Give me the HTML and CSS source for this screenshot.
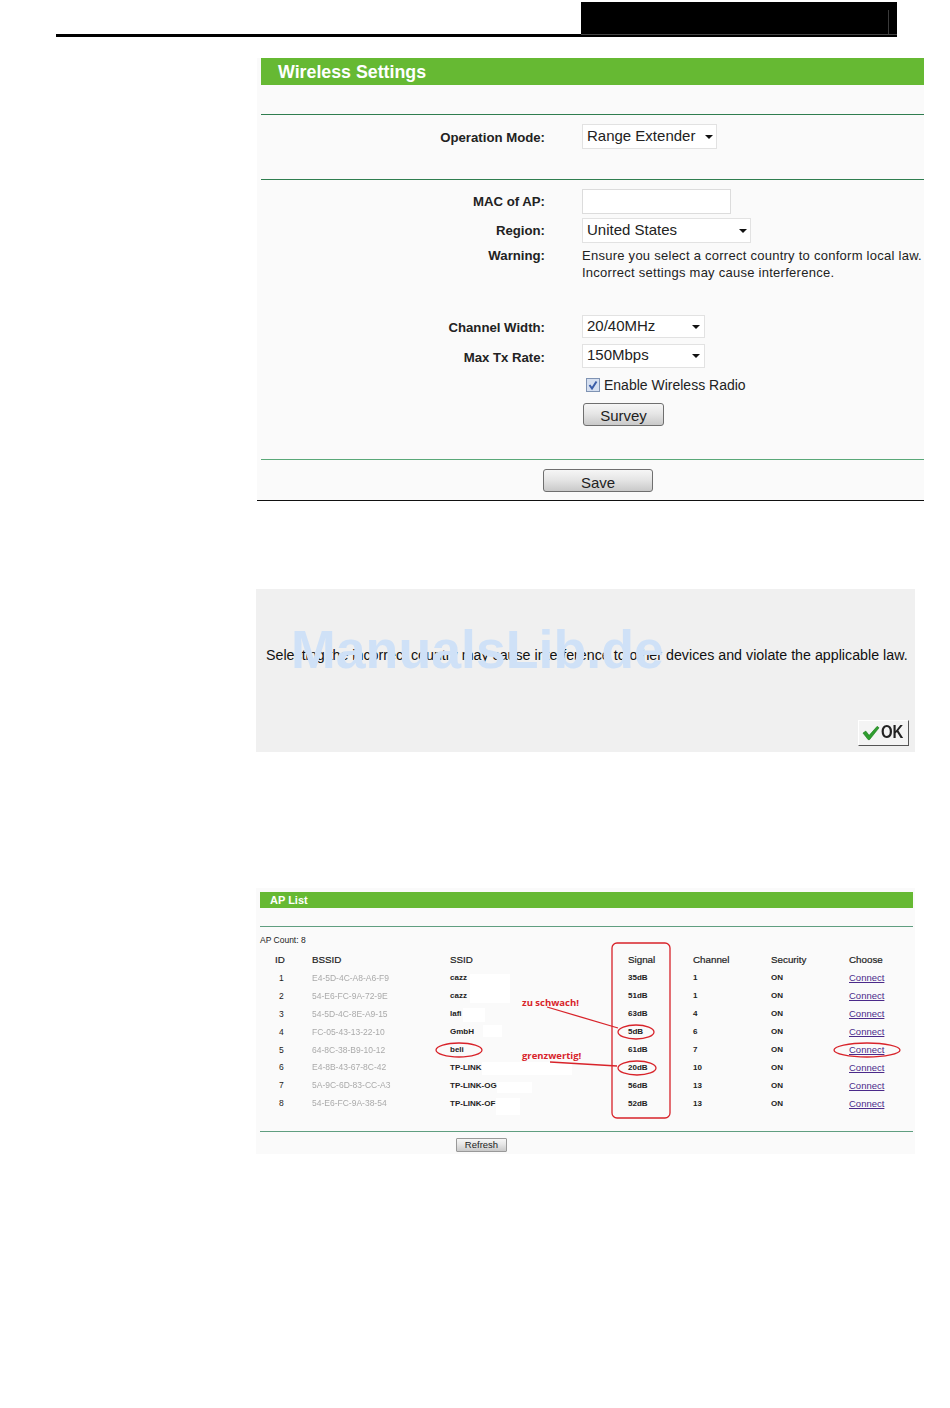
FILE: index.html
```html
<!DOCTYPE html>
<html lang="en">
<head>
<meta charset="utf-8">
<title>Wireless Settings</title>
<link rel="stylesheet" href="styles.css">
</head>
<body>
<header class="page-head"><div class="head-block"><div class="head-rule"></div></div></header>

<section class="settings">
  <h1 class="bar">Wireless Settings</h1>
  <div class="rule rule-first"></div>
  <div class="row row-mode"><div class="label">Operation Mode:</div><div class="select w135"><span>Range Extender</span><i class="caret"></i></div></div>
  <div class="rule rule-second"></div>
  <div class="row row-mac"><div class="label">MAC of AP:</div><div class="input"></div></div>
  <div class="row row-region"><div class="label">Region:</div><div class="select w169"><span>United States</span><i class="caret"></i></div></div>
  <div class="row row-warning"><div class="label">Warning:</div><div class="warning">Ensure you select a correct country to conform local law.<br>Incorrect settings may cause interference.</div></div>
  <div class="row row-channel"><div class="label">Channel Width:</div><div class="select w123"><span>20/40MHz</span><i class="caret"></i></div></div>
  <div class="row row-rate"><div class="label">Max Tx Rate:</div><div class="select w123"><span>150Mbps</span><i class="caret"></i></div></div>
  <div class="row row-check"><div class="label"></div><div class="check-wrap">
    <svg class="check" width="14" height="14" viewBox="0 0 14 14"><rect x="0.5" y="0.5" width="13" height="13" fill="#d5dff0" stroke="#7f93b3"/><path d="M3.5 7 L6 10.5 L10.5 3.5" fill="none" stroke="#3a5da8" stroke-width="2"/></svg>
    <span>Enable Wireless Radio</span></div></div>
  <div class="row row-survey"><div class="label"></div><button class="btn btn-survey">Survey</button></div>
  <div class="rule rule-third"></div>
  <div class="save-row"><button class="btn btn-save">Save</button></div>
</section>

<section class="dialog">
  <p class="dialog-text">Selecting the incorrect country may cause interference to other devices and violate the applicable law.</p>
  <div class="dialog-foot"><button class="ok">
    <svg width="19" height="16" viewBox="0 0 19 16"><path d="M1 8 L4 6 L7.5 10.5 L16 1 L18 2.5 L8 15 L6.5 15 Z" fill="#2f9e2f" stroke="#1c7a1c" stroke-width="0.6"/></svg>
    <span class="ok-text">OK</span></button></div>
  <div class="watermark">ManualsLib.de</div>
</section>

<section class="aplist">
  <h2 class="bar-small">AP List</h2>
  <div class="rule-small rule-top"></div>
  <div class="ap-count">AP Count: 8</div>
  <table class="ap-table">
    <thead><tr><th class="c-id">ID</th><th class="c-bssid">BSSID</th><th class="c-ssid">SSID</th><th class="c-signal">Signal</th><th class="c-channel">Channel</th><th class="c-sec">Security</th><th class="c-choose">Choose</th></tr></thead>
    <tbody>
      <tr><td class="n">1</td><td class="mac">E4-5D-4C-A8-A6-F9</td><td>cazz</td><td>35dB</td><td>1</td><td>ON</td><td><a href="#">Connect</a></td></tr>
      <tr><td class="n">2</td><td class="mac">54-E6-FC-9A-72-9E</td><td>cazz</td><td>51dB</td><td>1</td><td>ON</td><td><a href="#">Connect</a></td></tr>
      <tr><td class="n">3</td><td class="mac">54-5D-4C-8E-A9-15</td><td>lafi</td><td>63dB</td><td>4</td><td>ON</td><td><a href="#">Connect</a></td></tr>
      <tr><td class="n">4</td><td class="mac">FC-05-43-13-22-10</td><td>GmbH</td><td>5dB</td><td>6</td><td>ON</td><td><a href="#">Connect</a></td></tr>
      <tr><td class="n">5</td><td class="mac">64-8C-38-B9-10-12</td><td>beli</td><td>61dB</td><td>7</td><td>ON</td><td><a href="#">Connect</a></td></tr>
      <tr><td class="n">6</td><td class="mac">E4-8B-43-67-8C-42</td><td>TP-LINK</td><td>20dB</td><td>10</td><td>ON</td><td><a href="#">Connect</a></td></tr>
      <tr><td class="n">7</td><td class="mac">5A-9C-6D-83-CC-A3</td><td>TP-LINK-OG</td><td>56dB</td><td>13</td><td>ON</td><td><a href="#">Connect</a></td></tr>
      <tr><td class="n">8</td><td class="mac">54-E6-FC-9A-38-54</td><td>TP-LINK-OF</td><td>52dB</td><td>13</td><td>ON</td><td><a href="#">Connect</a></td></tr>
    </tbody>
  </table>
  <div class="rule-small rule-bottom"></div>
  <div class="refresh-row"><button class="btn btn-refresh">Refresh</button></div>
  <svg class="marks" viewBox="256 888 659 266" width="659" height="266">
    <g fill="#fff">
      <rect x="470" y="974" width="40" height="29"/>
      <rect x="463" y="1008" width="22" height="14"/>
      <rect x="483" y="1025" width="19" height="12"/>
      <rect x="482" y="1062" width="90" height="13"/>
      <rect x="497" y="1082" width="35" height="11"/>
      <rect x="496" y="1098" width="24" height="17"/>
    </g>
    <g fill="none" stroke="#d8232a" stroke-width="1.3">
      <rect x="612" y="943" width="58" height="175" rx="5"/>
      <ellipse cx="636" cy="1032" rx="18" ry="7"/>
      <ellipse cx="637" cy="1068" rx="19" ry="7"/>
      <ellipse cx="867" cy="1050" rx="33" ry="7"/>
      <ellipse cx="459" cy="1050" rx="23" ry="7"/>
      <path d="M547 1007 L618 1028"/>
      <path d="M550 1062 L617 1066"/>
    </g>
    <text class="note" x="522" y="1006">zu schwach!</text>
    <text class="note" x="522" y="1059">grenzwertig!</text>
  </svg>
</section>
</body>
</html>
```
FILE: styles.css
```css
* { box-sizing: border-box; }
html, body { margin: 0; padding: 0; background: #fff; }
body { width: 950px; height: 1408px; overflow: hidden; font-family: "Liberation Sans", Arial, sans-serif; color: #222; }

.page-head { margin: 0 0 0 56px; width: 841px; height: 37px; border-bottom: 3px solid #000; padding-top: 2px; display: flex; justify-content: flex-end; }
.head-block { width: 316px; height: 33px; background: #000; border-bottom: 1px solid #444; position: relative; }
.head-rule { position: absolute; right: 8px; top: 8px; bottom: 0; width: 1px; background: #3a3a3a; }

.settings { margin: 21px 0 0 257px; width: 667px; height: 443px; background: #fafafa; border-bottom: 1px solid #111; padding-left: 4px; }
.bar { margin: 0; height: 27px; background: #66b933; color: #fff; font-size: 17.8px; line-height: 28px; font-weight: bold; padding-left: 17px; }
.rule { height: 1px; background: #2f7d4f; }
.rule-first { margin-top: 29px; }
.rule-second { margin-top: 30px; }
.rule-third { margin-top: 33px; background: #5aa878; }

.row { display: flex; align-items: center; }
.label { width: 284px; text-align: right; font-size: 13.2px; font-weight: bold; color: #222; margin-right: 37px; flex: none; }
.row-mode { margin-top: 9px; height: 25px; margin-bottom: 30px; }
.row-mode .label { padding-top: 1px; }
.row-mac { margin-top: 9px; height: 25px; }
.row-region { margin-top: 4px; height: 25px; }
.row-warning { margin-top: 4px; align-items: flex-start; height: 35px; }
.row-warning .label { padding-top: 1px; }
.row-channel { margin-top: 33px; height: 23px; }
.row-rate { margin-top: 6px; height: 24px; }
.row-channel .label, .row-rate .label { padding-top: 2px; }
.row-check { margin-top: 8px; height: 18px; }
.row-survey { margin-top: 9px; height: 23px; }

.select { height: 100%; background: #fff; border: 1px solid #e2e2e2; padding: 0 3px 3px 4px; font-size: 15px; color: #222; display: flex; align-items: center; justify-content: space-between; }
.w135 { width: 135px; }
.w169 { width: 169px; }
.w123 { width: 123px; }
.w123 .caret { margin-right: 1px; }
.caret { width: 0; height: 0; border-left: 4px solid transparent; border-right: 4px solid transparent; border-top: 4px solid #111; margin-top: 3px; flex: none; }
.input { width: 149px; height: 25px; background: #fff; border: 1px solid #dcdcdc; }
.warning { font-size: 13px; line-height: 17px; letter-spacing: 0.26px; color: #222; white-space: nowrap; }
.check-wrap { display: flex; align-items: center; gap: 4px; margin-left: 4px; font-size: 14px; color: #222; }
.check { flex: none; }

.btn { border: 1px solid #6f6f6f; border-radius: 3px; background: linear-gradient(#f6f6f6, #e6e6e6 45%, #c9c9c9); font-family: "Liberation Sans", Arial, sans-serif; color: #222; padding: 0; }
.btn-survey { width: 81px; height: 23px; margin-left: 1px; font-size: 15px; padding-top: 1px; }
.save-row { padding: 9px 0 0 282px; }
.btn-save { display: block; width: 110px; height: 23px; font-size: 15px; padding-top: 3px; }

.dialog { position: relative; margin: 88px 0 0 256px; width: 659px; height: 163px; background: #f0f0f0; overflow: hidden; }
.dialog-text { margin: 0; padding-top: 58px; padding-left: 10px; height: 131px; font-size: 14.25px; color: #111; white-space: nowrap; }
.dialog-foot { display: flex; justify-content: flex-end; padding-right: 6px; }
.ok { width: 51px; height: 26px; padding: 0 0 0 3px; background: #f4f4f4; border: 1px solid; border-color: #fff #555 #555 #fff; display: flex; align-items: center; gap: 1px; font-family: "Liberation Sans", Arial, sans-serif; font-weight: bold; font-size: 18px; color: #222; }
.ok-text { display: block; transform: scaleX(0.83); transform-origin: left center; margin-top: -2px; }
.watermark { position: absolute; left: 35px; top: 30px; font-size: 53.7px; font-weight: bold; line-height: 60px; color: #cfe1f7; white-space: nowrap; }

.aplist { position: relative; margin: 136px 0 0 256px; width: 659px; height: 266px; background: #fafafa; padding-left: 4px; padding-top: 4px; overflow: hidden; }
.bar-small { margin: 0; width: 653px; height: 16px; background: #66b933; color: #fff; font-size: 11px; line-height: 16px; font-weight: bold; padding-left: 10px; }
.rule-small { width: 653px; height: 1px; background: #5f9e80; }
.rule-top { margin-top: 18px; }
.ap-count { font-size: 8.5px; line-height: 10px; margin-top: 8px; color: #222; }
.ap-table { border-collapse: collapse; table-layout: fixed; width: 653px; margin-top: 5px; font-size: 8px; color: #222; }
.ap-table th { text-align: left; font-weight: normal; font-size: 9.8px; height: 19px; padding: 0; -webkit-text-stroke: 0.2px #222; }
.ap-table td { height: 17.9px; padding: 0; font-weight: bold; }
.c-id { width: 52px; padding-left: 15px !important; }
.c-bssid { width: 138px; }
.c-ssid { width: 178px; }
.c-signal { width: 65px; }
.c-channel { width: 78px; }
.c-sec { width: 78px; }
.ap-table td.n { padding-left: 19px; font-weight: normal; font-size: 8.5px; }
.ap-table td.mac { color: #aaa; font-weight: normal; font-size: 8.5px; filter: blur(0.4px); }
.ap-table a { color: #4b2a8a; font-weight: normal; font-size: 9.5px; }
.rule-bottom { margin-top: 19px; }
.refresh-row { padding: 6px 0 0 196px; }
.btn-refresh { display: block; width: 51px; height: 14px; font-size: 9.5px; line-height: 12px; border-radius: 1px; border-color: #999; }
.marks { position: absolute; left: 0; top: 0; }
.note { fill: #d8232a; font-family: "Open Sans", sans-serif; font-weight: bold; font-size: 9.5px; }
```
